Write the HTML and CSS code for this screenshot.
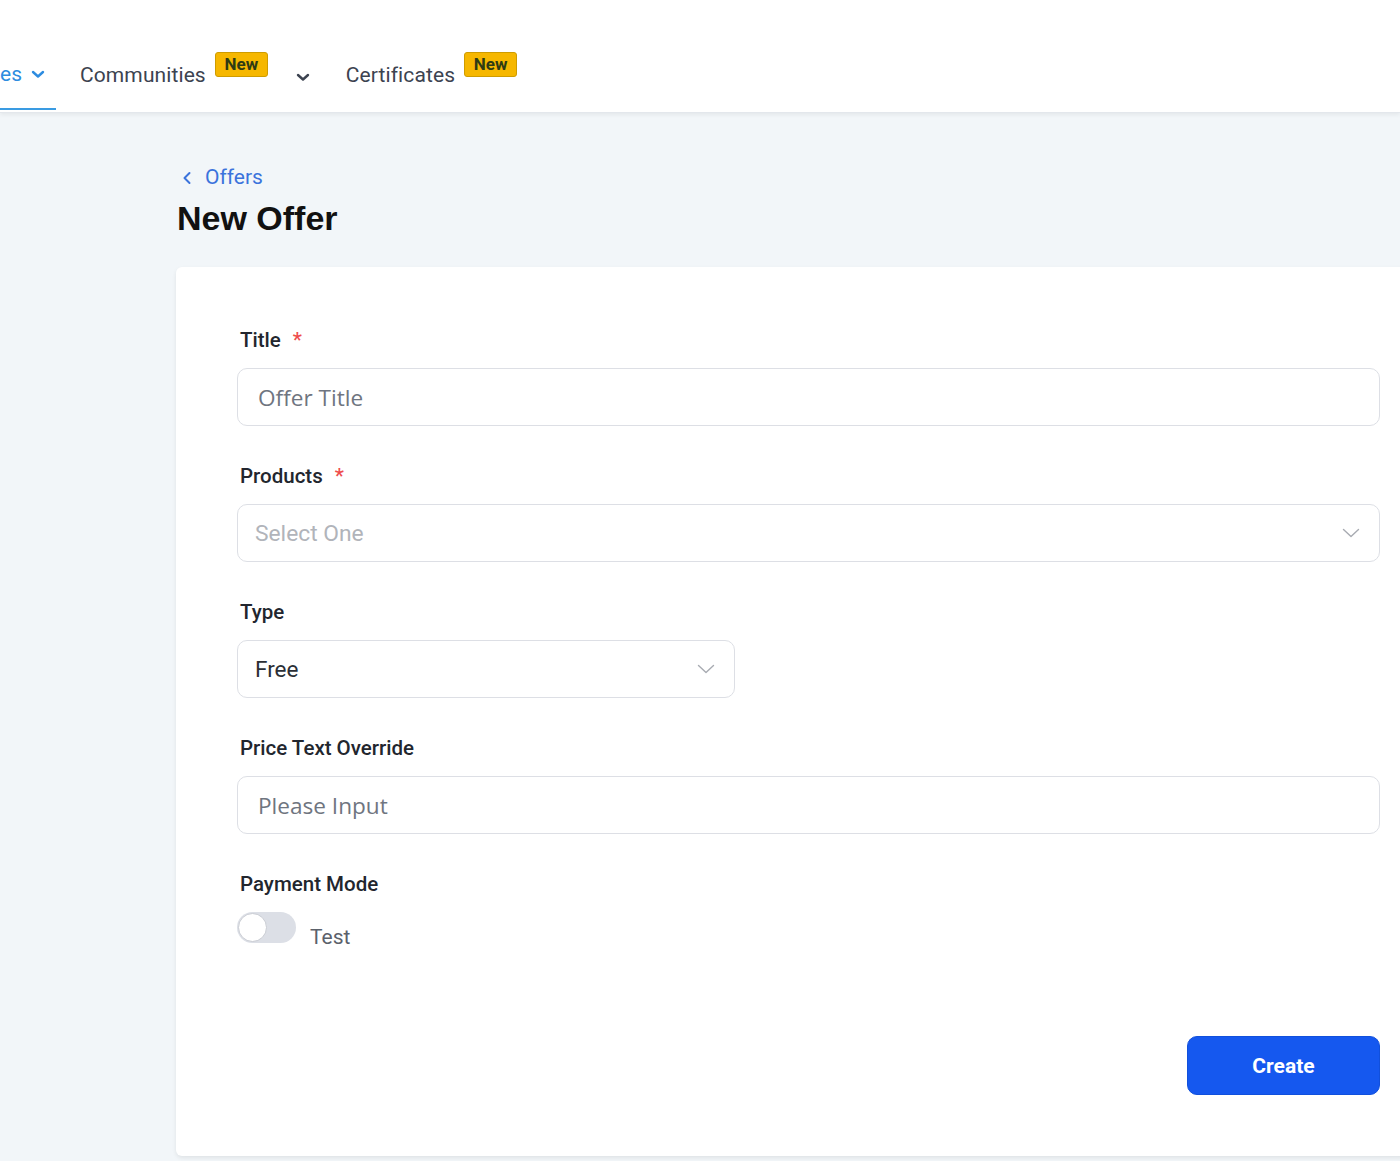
FILE: index.html
```html
<!DOCTYPE html>
<html lang="en">
<head>
<meta charset="utf-8">
<title>New Offer</title>
<link rel="stylesheet" href="styles.css">
</head>
<body>
<header class="topnav">
  <div class="nav-item active">
    <span class="nav-text">es</span>
    <svg class="nav-chev" width="14" height="10" viewBox="0 0 14 10"><path d="M2 3 L7 7.5 L12 3" fill="none" stroke="currentColor" stroke-width="2.4" stroke-linecap="round" stroke-linejoin="round"/></svg>
  </div>
  <div class="nav-item">
    <span class="nav-text">Communities</span>
    <span class="badge">New</span>
    <svg class="nav-chev dark" width="14" height="10" viewBox="0 0 14 10"><path d="M2 3 L7 7.5 L12 3" fill="none" stroke="currentColor" stroke-width="2.4" stroke-linecap="round" stroke-linejoin="round"/></svg>
  </div>
  <div class="nav-item">
    <span class="nav-text">Certificates</span>
    <span class="badge">New</span>
  </div>
</header>

<main class="page">
  <a class="crumb" href="#">
    <svg width="10" height="16" viewBox="0 0 10 16"><path d="M7.5 3 L2.5 8 L7.5 13" fill="none" stroke="currentColor" stroke-width="2" stroke-linecap="round" stroke-linejoin="round"/></svg>
    <span>Offers</span>
  </a>
  <h1 class="title">New Offer</h1>

  <section class="card">
    <div class="field">
      <label class="label">Title <span class="req">*</span></label>
      <div class="input"><span class="ph">Offer Title</span></div>
    </div>
    <div class="field">
      <label class="label">Products <span class="req">*</span></label>
      <div class="input select"><span class="ph-light">Select One</span>
        <svg class="sel-chev" width="18" height="10" viewBox="0 0 18 10"><path d="M1.5 1.5 L9 8.5 L16.5 1.5" fill="none" stroke="currentColor" stroke-width="1.4" stroke-linecap="round" stroke-linejoin="round"/></svg>
      </div>
    </div>
    <div class="field">
      <label class="label">Type</label>
      <div class="input select short"><span class="value">Free</span>
        <svg class="sel-chev" width="18" height="10" viewBox="0 0 18 10"><path d="M1.5 1.5 L9 8.5 L16.5 1.5" fill="none" stroke="currentColor" stroke-width="1.4" stroke-linecap="round" stroke-linejoin="round"/></svg>
      </div>
    </div>
    <div class="field">
      <label class="label">Price Text Override</label>
      <div class="input"><span class="ph">Please Input</span></div>
    </div>
    <div class="field">
      <label class="label">Payment Mode</label>
      <div class="switch-row">
        <span class="switch"><span class="knob"></span></span>
        <span class="switch-text">Test</span>
      </div>
    </div>
    <div class="actions">
      <button class="btn" type="button">Create</button>
    </div>
  </section>
</main>
</body>
</html>
```

FILE: styles.css
```css
html, body {
  margin: 0;
  padding: 0;
  overflow: hidden;
}
body {
  background: #f2f6f9;
  font-family: Roboto, "Liberation Sans", Arial, sans-serif;
  color: #1f2329;
  width: 1400px;
  height: 1161px;
}

.topnav {
  height: 113px;
  background: #ffffff;
  display: flex;
  align-items: stretch;
  border-bottom: 1px solid #e3e7ec;
  box-shadow: 0 2px 4px rgba(0, 0, 0, 0.06);
  box-sizing: border-box;
  position: relative;
  z-index: 1;
}
.nav-item {
  display: flex;
  align-items: center;
  height: 110px;
  padding-top: 40px;
  box-sizing: border-box;
  color: #3c4350;
  font-size: 21px;
  letter-spacing: 0.1px;
}
.nav-item.active {
  color: #2d8ce0;
  border-bottom: 2px solid #3a9be2;
  width: 56px;
  margin-right: 24px;
}
.nav-item.active .nav-chev {
  margin-left: 9px;
}
.nav-text {
  line-height: 24px;
}
.nav-chev {
  display: block;
}
.nav-chev.dark {
  color: #3c4350;
  margin-left: 28px;
  margin-top: 4px;
}
.nav-item:nth-child(2) {
  margin-right: 36px;
}
.badge {
  display: inline-block;
  align-self: flex-start;
  margin-top: 12px;
  margin-left: 9px;
  width: 53px;
  height: 25px;
  box-sizing: border-box;
  background: #f6b700;
  border: 1px solid #cf9c00;
  border-radius: 3px;
  color: #2e3b14;
  font-size: 17px;
  font-weight: 700;
  letter-spacing: 0;
  line-height: 23px;
  text-align: center;
}

.page {
  padding: 52px 0 0 176px;
}
.crumb {
  display: inline-flex;
  align-items: center;
  gap: 13px;
  margin-left: 6px;
  color: #3b73dc;
  text-decoration: none;
  font-size: 21px;
  line-height: 24px;
}
.crumb svg {
  display: block;
  margin-top: 2px;
}
.title {
  margin: 8px 0 0 1px;
  font-family: "Liberation Sans", Arial, sans-serif;
  font-size: 34px;
  line-height: 40px;
  font-weight: 700;
  color: #111111;
}
.card {
  margin-top: 29px;
  width: 1265px;
  background: #ffffff;
  border-radius: 6px 0 0 6px;
  box-shadow: 0 2px 4px rgba(0, 0, 0, 0.08);
  padding: 61px 61px 61px 61px;
  box-sizing: border-box;
}
.field {
  margin-bottom: 38px;
}
.field:nth-child(5) {
  margin-bottom: 0;
}
.label {
  display: block;
  font-size: 20.5px;
  font-weight: 500;
  line-height: 24px;
  color: #22262e;
  margin: 0 0 16px 3px;
}
.req {
  color: #ee4d4d;
  margin-left: 7px;
}
.input {
  height: 58px;
  width: 1143px;
  box-sizing: border-box;
  border: 1.5px solid #dddfe5;
  border-radius: 10px;
  display: flex;
  align-items: center;
  padding: 0 19px 0 20px;
  background: #ffffff;
}
.input.select {
  padding-left: 17px;
  justify-content: space-between;
}
.input.short {
  width: 498px;
}
.ph {
  font-family: "Open Sans", "Noto Sans", sans-serif;
  font-size: 22.6px;
  color: #6f7580;
}
.ph-light {
  font-size: 22.8px;
  color: #b1b4ba;
}
.value {
  font-size: 22.5px;
  color: #2b2f36;
}
.sel-chev {
  color: #a8abb2;
  display: block;
}
.switch-row {
  display: flex;
  align-items: flex-start;
  gap: 14px;
  margin-top: 0;
}
.switch {
  width: 59px;
  height: 31px;
  border-radius: 16px;
  background: #dcdfe6;
  position: relative;
  display: block;
  flex: none;
}
.knob {
  position: absolute;
  left: 1px;
  top: 1px;
  width: 29px;
  height: 29px;
  border-radius: 50%;
  background: #ffffff;
  box-sizing: border-box;
  border: 1px solid #c9ccd3;
}
.switch-text {
  font-size: 21px;
  color: #5b616b;
  line-height: 24px;
  margin-top: 13px;
}
.actions {
  display: flex;
  justify-content: flex-end;
  margin-top: 87px;
}
.btn {
  width: 193px;
  height: 59px;
  background: #1558ef;
  border: 1px solid #1150dc;
  border-radius: 10px;
  color: #ffffff;
  font-family: Roboto, "Liberation Sans", Arial, sans-serif;
  font-size: 21px;
  font-weight: 700;
  margin-right: 0;
}
```
